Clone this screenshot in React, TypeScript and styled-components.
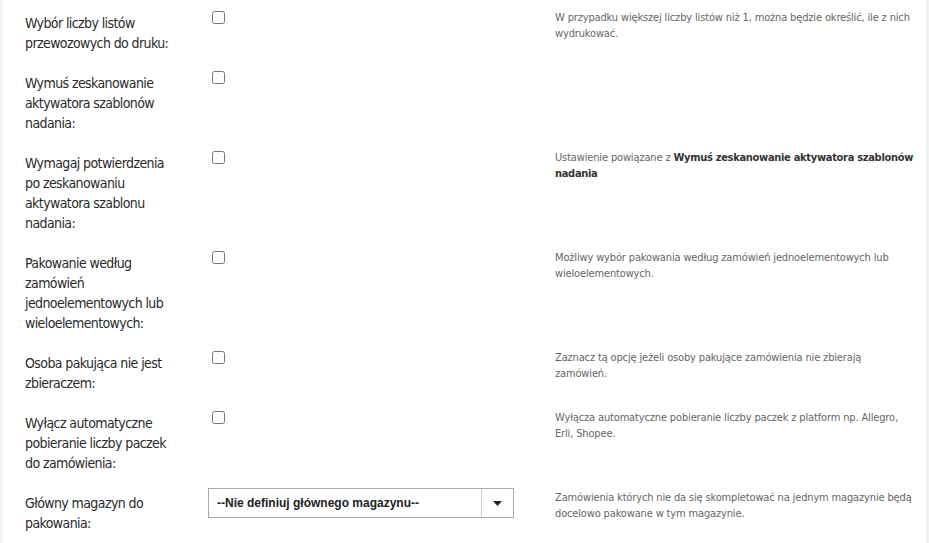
import React, { FC } from 'react';
import styled, { createGlobalStyle } from 'styled-components';

const GlobalStyle = createGlobalStyle`
  html, body {
    margin: 0;
    padding: 0;
    background: #f2f2f2;
  }
`;

interface Setting {
  label: string[];
  desc?: React.ReactNode[];
  select?: boolean;
}

const settings: Setting[] = [
  {
    label: ['Wybór liczby listów', 'przewozowych do druku:'],
    desc: ['W przypadku większej liczby listów niż 1, można będzie określić, ile z nich', 'wydrukować.'],
  },
  {
    label: ['Wymuś zeskanowanie', 'aktywatora szablonów', 'nadania:'],
  },
  {
    label: ['Wymagaj potwierdzenia', 'po zeskanowaniu', 'aktywatora szablonu', 'nadania:'],
    desc: [
      <>
        Ustawienie powiązane z <b>Wymuś zeskanowanie aktywatora szablonów</b>
      </>,
      <b>nadania</b>,
    ],
  },
  {
    label: ['Pakowanie według', 'zamówień', 'jednoelementowych lub', 'wieloelementowych:'],
    desc: ['Możliwy wybór pakowania według zamówień jednoelementowych lub', 'wieloelementowych.'],
  },
  {
    label: ['Osoba pakująca nie jest', 'zbieraczem:'],
    desc: ['Zaznacz tą opcję jeżeli osoby pakujące zamówienia nie zbierają', 'zamówień.'],
  },
  {
    label: ['Wyłącz automatyczne', 'pobieranie liczby paczek', 'do zamówienia:'],
    desc: ['Wyłącza automatyczne pobieranie liczby paczek z platform np. Allegro,', 'Erli, Shopee.'],
  },
  {
    label: ['Główny magazyn do', 'pakowania:'],
    desc: ['Zamówienia których nie da się skompletować na jednym magazynie będą', 'docelowo pakowane w tym magazynie.'],
    select: true,
  },
];

const Panel = styled.div`
  margin: 0 3px;
  min-height: 543px;
  background: #fff;
  padding: 11px 0 0 22px;
  box-sizing: border-box;
`;

const Row = styled.div`
  display: grid;
  grid-template-columns: 183px 347px 1fr;
  margin-bottom: 18px;
`;

const Label = styled.div`
  padding-top: 2px;
  font-family: 'DejaVu Sans Condensed', 'Liberation Sans', sans-serif;
  font-size: 14px;
  letter-spacing: -0.6px;
  line-height: 20px;
  color: #2a2a2a;
  white-space: nowrap;
`;

const Control = styled.div`
  display: flex;
  align-items: flex-start;
`;

const Check = styled.input.attrs({ type: 'checkbox' })`
  margin: 0 0 0 4px;
  width: 13px;
  height: 13px;
`;

const SelectBox = styled.div`
  margin-top: -3px;
  width: 306px;
  height: 30px;
  box-sizing: border-box;
  border: 1px solid #aaa;
  display: flex;
  background: #fff;
`;

const SelectText = styled.div`
  flex: 1;
  padding-left: 8px;
  font-family: 'Liberation Sans', Arial, sans-serif;
  font-size: 12px;
  font-weight: bold;
  line-height: 28px;
  color: #222;
`;

const SelectArrow = styled.div`
  width: 31px;
  border-left: 1px solid #ccc;
  display: flex;
  align-items: center;
  justify-content: center;
`;

const Desc = styled.div`
  font-family: 'DejaVu Sans Condensed', 'Liberation Sans', sans-serif;
  font-size: 11px;
  letter-spacing: -0.15px;
  line-height: 16px;
  color: #666;
  white-space: nowrap;
  margin-top: -1px;

  b {
    color: #333;
    letter-spacing: -0.3px;
  }
`;

const Lines: FC<{ lines: React.ReactNode[] }> = ({ lines }) => (
  <>
    {lines.map((l, i) => (
      <div key={i}>{l}</div>
    ))}
  </>
);

const App: FC = () => (
  <>
    <GlobalStyle />
    <Panel>
      {settings.map((s, i) => (
        <Row key={i}>
          <Label>
            <Lines lines={s.label} />
          </Label>
          <Control>
            {s.select ? (
              <SelectBox>
                <SelectText>--Nie definiuj głównego magazynu--</SelectText>
                <SelectArrow>
                  <svg width="9" height="5" viewBox="0 0 9 5">
                    <path d="M0 0h9L4.5 5z" fill="#222" />
                  </svg>
                </SelectArrow>
              </SelectBox>
            ) : (
              <Check />
            )}
          </Control>
          <Desc>{s.desc && <Lines lines={s.desc} />}</Desc>
        </Row>
      ))}
    </Panel>
  </>
);

export default App;
